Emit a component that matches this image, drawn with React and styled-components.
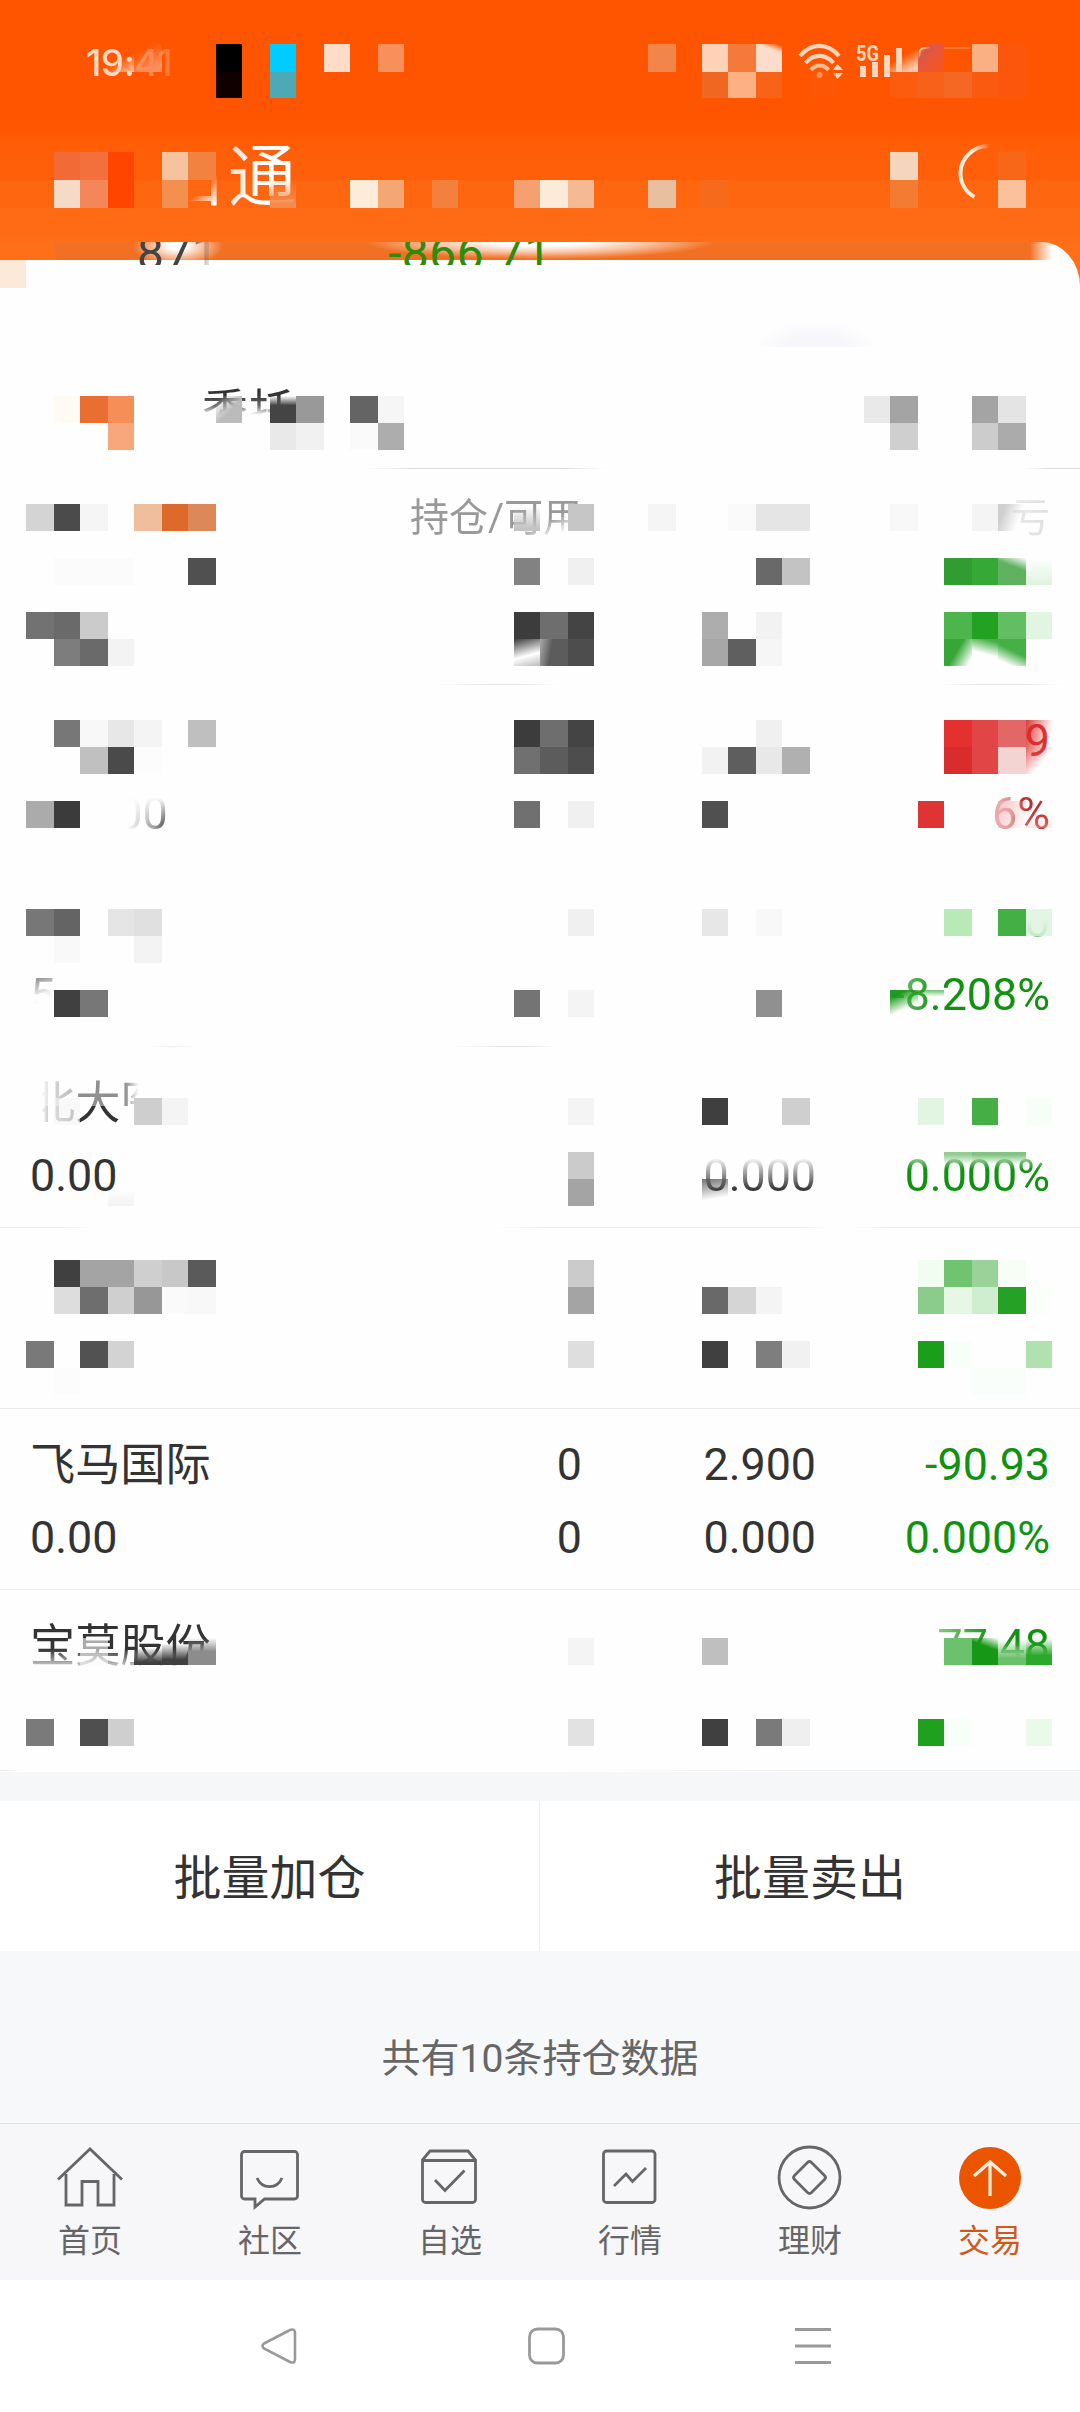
import React from "react";
import styled, { createGlobalStyle } from "styled-components";

const GlobalStyle = createGlobalStyle`
  * { box-sizing: border-box; }
  body { margin: 0; background: #fff; }
`;

const INK = "#333";
const GREEN = "#109210";
const RED = "#b93333";

const Screen = styled.div`
  position: relative;
  width: 1080px;
  height: 2412px;
  overflow: hidden;
  display: flex;
  flex-direction: column;
  background: #ff6f18;
  color: ${INK};
  font-family: Roboto, "Noto Sans CJK SC", sans-serif;
  font-size: 45px;
`;

const Fade = styled.span`
  display: inline-block;
  color: ${(p) => p.$color || "inherit"};
  mask-image: ${(p) => p.$mask || "none"};
  mask-composite: intersect;
`;

/* ---------- orange top ---------- */

const Top = styled.header`
  height: 242px;
  flex: none;
  display: flex;
  flex-direction: column;
  background: linear-gradient(#ff5500 0 126px, #ff5b04 140px, #ff5f09 152px 180px, #ff6610 181px 208px, #ff6b14 209px 236px, #ff6e17 242px);
`;

const StatusBar = styled.div`
  height: 126px;
  display: flex;
  justify-content: space-between;
  padding: 37px 88px 0 86px;
  color: #ffd9c2;
`;

const Clock = styled(Fade)`
  font: 500 37px/52px Inter, sans-serif;
  letter-spacing: -0.5px;
  height: 52px;
`;

const StatusIcons = styled.div`
  display: flex;
  width: 196px;
`;

const TitleBar = styled.div`
  flex: 1;
  display: flex;
  justify-content: space-between;
  padding: 16px 54px 0 160px;
`;

const Title = styled.div`
  display: flex;
  font-size: 68px;
  line-height: 72px;
  color: #fff;
`;

/* ---------- white sheet ---------- */

const Sheet = styled.section`
  flex: none;
  height: 1530px;
  display: flex;
  flex-direction: column;
  background: #fefefe;
  border-radius: 0 39px 0 0 / 0 44px 0 0;
  overflow: hidden;
`;

const Summary = styled.div`
  height: 23px;
  flex: none;
  overflow: hidden;
  display: flex;
  align-items: flex-end;
  padding-left: 137px;
  font-size: 48px;
  line-height: 40px;
  letter-spacing: 0.4px;
  background:
    radial-gradient(ellipse 175px 17px at 540px 0, #fff 25%, rgba(255, 255, 255, 0.6) 60%, transparent) 0 0 / 1080px 18px no-repeat,
    radial-gradient(ellipse 45px 20px at 178px 4px, #fff 20%, transparent) 0 0 / 1080px 18px no-repeat,
    linear-gradient(90deg, #ff6f18 54px, #f27023 55px 1030px, rgba(242, 112, 35, 0) 1052px) 0 0 / 1080px 18px no-repeat;
  span { width: 251px; margin-bottom: -9px; }
`;

const Banner = styled.div`
  height: 82px;
  flex: none;
  background: radial-gradient(ellipse 62px 26px at 816px 82px, #f7f7fb 45%, rgba(247, 247, 251, 0)) no-repeat;
`;

const rule = (image) => `
  background-image: ${image};
  background-size: 100% 1px;
  background-position: 0 100%;
  background-repeat: no-repeat;
`;

const Tabs = styled.nav`
  height: 122px;
  flex: none;
  padding: 32px 0 0 202px;
  font-size: 46px;
  letter-spacing: 1px;
  line-height: 64px;
  ${(p) => rule(p.$rule)}
`;

const TableHead = styled.div`
  height: 90px;
  flex: none;
  display: flex;
  justify-content: space-between;
  padding: 20px 30px 0 410px;
  font-size: 39px;
  line-height: 58px;
  color: #999;
`;

const Row = styled.div`
  height: ${(p) => p.$height || 181}px;
  flex: none;
  display: flex;
  flex-direction: column;
  justify-content: flex-end;
  padding-bottom: 16px;
  overflow: hidden;
  ${(p) => rule(p.$rule)}
`;

const Line = styled.div`
  height: 73px;
  flex: none;
  display: grid;
  grid-template-columns: 318px 234px 234px 234px;
  padding: 0 30px;
  line-height: 73px;
  font-size: 44.8px;
  white-space: nowrap;
  > * { justify-self: end; height: 73px; }
  > :first-child { justify-self: start; }
  &:first-child > :first-child { font-size: 45.2px; line-height: 75px; }
`;

/* ---------- lower part ---------- */

const Actions = styled.div`
  flex: none;
  display: flex;
  padding-top: 29px;
  background: #f6f7f9;
`;

const ActionButton = styled.button`
  flex: ${(p) => (p.$divided ? "1" : "0 0 539px")};
  height: 150px;
  padding: 0 0 4px;
  border: 0;
  border-left: ${(p) => (p.$divided ? "1px solid #ebebeb" : "0")};
  background: #fff;
  color: ${INK};
  font: inherit;
  font-size: 48px;
`;

const Count = styled.div`
  flex: none;
  height: 173px;
  padding-top: 79px;
  background: #f7f8fa;
  color: #666;
  font-size: 39px;
  line-height: 58px;
  text-align: center;
  border-bottom: 1px solid #e2e3e6;
`;

const BottomNav = styled.nav`
  flex: none;
  height: 156px;
  display: flex;
  background: #f7f7fa;
`;

const NavItem = styled.a`
  flex: 1;
  display: flex;
  flex-direction: column;
  align-items: center;
  padding-top: 19px;
  font-size: 32px;
  line-height: 48px;
  color: ${(p) => (p.$active ? "#d05a18" : "#666")};
  svg { flex: none; margin-bottom: 2px; }
`;

const SystemNav = styled.div`
  flex: 1;
  display: flex;
  align-items: flex-start;
  gap: 226px;
  padding: 46px 0 0 259px;
  background: #fff;
  svg { display: block; }
`;

/* ---------- pixelated privacy layer ---------- */

const Mosaic = styled.div`
  position: absolute;
  top: 18px;
  left: 0;
  display: grid;
  grid-template-columns: repeat(9, 26px 28px) repeat(4, 28px 26px) repeat(7, 26px 28px);
  grid-template-rows: repeat(3, 26px 28px) 28px 26px 26px 28px repeat(54, 27px);
  pointer-events: none;
`;

const Tile = styled.i`
  grid-column: ${(p) => p.$col + 1};
  grid-row: ${(p) => p.$row + 1};
  background: ${(p) => p.$fill};
`;

const down = (c, from = 0, to = 100) => `linear-gradient(transparent ${from}%, ${c} ${to}%)`;
const up = (c, from = 0, to = 100) => `linear-gradient(${c} ${from}%, transparent ${to}%)`;

const TILES = {
  1: { 4: "linear-gradient(150deg, transparent 55%, #ffc4a2)", 5: "linear-gradient(150deg, transparent 25%, #fa8d5a 80%)", 8: "#000", 10: "#00ccff", 12: "#ffdcc8", 14: "#f9905c", 24: "#f2854a", 26: "#ffd3b8", 27: "#f57a3a", 28: "linear-gradient(200deg, transparent 4%, #fedccb 24%)", 33: "linear-gradient(150deg, transparent 45%, #ffc9a9 85%)", 34: "linear-gradient(135deg, transparent 15%, #d8584a 30%, #e9563a 50%, #f8561c)", 36: "#fbb083", 37: "#fc560c" },
  2: { 8: "#100000", 10: "#4da9b5", 26: "#f06722", 27: "#fcb084", 28: "#f76418", 30: "rgba(251, 90, 10, .5)", 33: "#fb5c0e", 34: "#f8611a", 35: "#f46824", 36: "#f95a10", 37: "#fb560c" },
  5: { 2: "#f26a36", 3: "#f3703d", 4: "#ff4500", 6: "#f6c39e", 7: "#f2823f", 33: "#f6d5bd", 37: "#f86618" },
  6: { 2: "#f6dac8", 3: "#f58659", 4: "#ff4500", 6: "#f39050", 10: down("#f58a4c", 0, 85), 13: "#feecdb", 14: "#f4a773", 16: "#f4803d", 19: "#f5a070", 20: "#fcebd9", 21: "#f5ba93", 24: "#e8bf9f", 26: "#f66a1c", 33: "#f47b32", 37: "#fbc19d" },
  9: { 0: "#fde9da" },
  14: { 2: "#fffaf4", 3: "#e86f31", 4: "#f68e58", 8: "linear-gradient(135deg, transparent 10%, #bbb 55%)", 10: down("#444", 0, 35), 11: "#999", 13: "#646464", 14: "#f6f6f6", 32: "#e9e9e9", 33: "#a4a4a4", 36: "#a4a4a4", 37: "#e4e4e4" },
  15: { 4: "#f8a67c", 10: "#e9e9e9", 11: "#f1f1f1", 13: "#fafafa", 14: "#adadad", 33: "#cfcfcf", 36: "#ccc", 37: "#ababab" },
  18: { 1: "#d4d4d4", 2: "#4b4b4b", 3: "#f5f5f5", 5: "#efbe9c", 6: "#dd6a28", 7: "#dc8858", 19: down("#c4c4c4", 10, 90), 21: "#c6c6c6", 24: "#f5f5f5", 27: "#fafafa", 28: "#e5e5e5", 29: "#e5e5e5", 33: "#f8f8f8", 36: "#f4f4f4", 37: "linear-gradient(110deg, #cfcfcf 20%, transparent 70%)" },
  20: { 2: "#fbfbfb", 3: "#fbfbfb", 4: "#fbfbfb", 7: "#505050", 19: "#828282", 21: "#f0f0f0", 28: "#696969", 29: "#c3c3c3", 35: "#319c31", 36: "#36a836", 37: "linear-gradient(200deg, transparent, #60b260 35%)", 38: "linear-gradient(transparent, rgba(215, 240, 215, .8))" },
  22: { 1: "#727272", 2: "#6a6a6a", 3: "#cbcbcb", 19: "#3c3c3c", 20: "#6e6e6e", 21: "#444", 26: "#adadad", 28: "#f2f2f2", 35: "#4cb64c", 36: "#22a122", 37: "#63bd63", 38: "#e2f5e2" },
  23: { 2: "#7d7d7d", 3: "#6a6a6a", 4: "#f3f3f3", 19: "linear-gradient(165deg, #3c3c3c, rgba(255,255,255,.9) 60%, #bbb)", 20: "linear-gradient(100deg, #aaa, #5c5c5c 40%)", 21: "#4d4d4d", 26: "#a7a7a7", 27: "#5f5f5f", 28: "#f6f6f6", 35: "linear-gradient(120deg, #36a736 45%, rgba(54, 167, 54, 0) 90%)", 36: "linear-gradient(195deg, #45b045 10%, rgba(69, 176, 69, 0) 55%)", 37: "linear-gradient(205deg, #45b045 45%, rgba(69, 176, 69, 0) 85%)" },
  26: { 2: "#777", 3: "#f8f8f8", 4: "#e7e7e7", 5: "#f4f4f4", 7: "#bfbfbf", 19: "#3c3c3c", 20: "#6e6e6e", 21: "#444", 28: "#f0f0f0", 35: "#e53030", 36: "#e24545", 37: "#e36767", 38: "linear-gradient(100deg, rgba(218, 40, 40, .9), rgba(230, 90, 90, 0) 90%)" },
  27: { 3: "#c0c0c0", 4: "#4a4a4a", 5: "#fcfcfc", 19: "#707070", 20: "#5c5c5c", 21: "#4d4d4d", 26: "#f2f2f2", 27: "#5e5e5e", 28: "#e8e8e8", 29: "#b0b0b0", 35: "#d92c2c", 36: "#e24545", 37: "#f4d3d3", 38: "linear-gradient(130deg, rgba(225, 60, 60, .8), rgba(230, 90, 90, 0) 60%)" },
  29: { 1: "#ababab", 2: "#3b3b3b", 19: "#707070", 21: "#f0f0f0", 26: "#505050", 34: "#de3434", 37: "linear-gradient(115deg, rgba(245, 170, 170, .7), rgba(245, 170, 170, 0))", 38: down("rgba(245, 200, 200, .4)", 40) },
  33: { 1: "#777", 2: "#646464", 4: "#e5e5e5", 5: "#e0e0e0", 21: "#f0f0f0", 26: "#e7e7e7", 28: "#f8f8f8", 35: "#b7eab7", 37: "#44af44", 38: "rgba(217, 243, 217, .75)" },
  34: { 2: "#f9f9f9", 5: "#f3f3f3" },
  36: { 2: "#404040", 3: "#777", 19: "#747474", 21: "#f4f4f4", 28: "#909090", 33: "linear-gradient(155deg, rgba(20, 150, 20, .95) 20%, rgba(20, 150, 20, 0) 65%)", 34: up("rgba(20, 150, 20, .6)", 0, 25) },
  40: { 2: "rgba(245, 245, 245, .6)", 5: "#cecece", 6: "#f4f4f4", 21: "#f4f4f4", 26: "#3f3f3f", 29: "#cfcfcf", 34: "#e2f5e2", 36: "#45ae45", 38: "#f7fdf7" },
  42: { 21: "#cbcbcb", 35: up("#94cc94", 10, 45), 36: up("#80c480", 10, 45), 37: up("#80c480", 10, 45) },
  43: { 4: down("#f2f2f2", 40), 21: "#a4a4a4", 26: "linear-gradient(170deg, rgba(90, 90, 90, .85), transparent 70%)" },
  46: { 2: "#404040", 3: "#a4a4a4", 4: "#a4a4a4", 5: "#cfcfcf", 6: "#c8c8c8", 7: "#5a5a5a", 21: "#cbcbcb", 34: "#f1fdf1", 35: "#70c470", 36: "#9ad29a", 37: "#f6fef6" },
  47: { 2: "#ddd", 3: "#6e6e6e", 4: "#cfcfcf", 5: "#979797", 6: "#fafafa", 7: "#f8f8f8", 21: "#a4a4a4", 26: "#696969", 27: "#d5d5d5", 28: "#f4f4f4", 34: "#8bcb8b", 35: "#e6f7e6", 36: "#cfeecf", 37: "#25a125", 38: "#fafffa" },
  49: { 1: "#797979", 3: "#525252", 4: "#d3d3d3", 21: "#dedede", 26: "#404040", 28: "#7e7e7e", 29: "#f1f1f1", 34: "#1b9f1b", 35: "#f8fef8", 38: "#b0e2b0" },
  50: { 2: "#fcfcfc", 36: "#fafefa", 37: "#fafefa" },
  60: { 3: "rgba(250, 250, 250, .6)", 5: down("#404040", 35, 90), 6: down("#404040", 20, 80), 7: down("#8c8c8c", 0, 50), 21: "#f4f4f4", 26: "#bfbfbf", 35: "#6cc26c", 36: "linear-gradient(200deg, transparent, #169816 35%)", 37: down("#6cc26c", 5, 75), 38: down("#2ba92b", 0, 65) },
  63: { 1: "#7a7a7a", 3: "#4f4f4f", 4: "#cfcfcf", 21: "#e2e2e2", 26: "#404040", 28: "#7a7a7a", 29: "#efefef", 34: "#1fa01f", 35: "#f8fef8", 38: "#eafaea" },
};

/* ---------- positions ---------- */

const FULL = "linear-gradient(#ebebeb, #ebebeb)";
const NONE = "none";
const cell = (text, mask, color) => ({ text, mask, color });
const none = cell("");

const ROWS = [
  {
    height: 126,
    rule: "linear-gradient(90deg, transparent 435px, #e4e4e4 490px, #e4e4e4 520px, transparent 560px 940px, #e4e4e4 980px, #e4e4e4 1020px, transparent 1065px)",
    lines: [
      [none, none, none, none],
      [none, none, none, none],
    ],
  },
  {
    rule: NONE,
    lines: [
      [none, none, none, cell("9", NONE, "#d33")],
      [
        cell("000.00", "linear-gradient(90deg, transparent 70%, rgba(0,0,0,.25) 80%, rgba(0,0,0,.5) 90%, #000), linear-gradient(transparent 28%, #000 65%)", "#444"),
        none,
        none,
        cell("6%", "linear-gradient(90deg, rgba(0,0,0,.35), rgba(0,0,0,.55) 35%, #000 45%)", RED),
      ],
    ],
  },
  {
    rule: "linear-gradient(90deg, transparent 150px, #ededed 172px, transparent 198px 450px, #e6e6e6 500px, #e6e6e6 530px, transparent 558px)",
    lines: [
      [none, none, none, cell("0", "linear-gradient(transparent 45%, rgba(0,0,0,.5) 70%)", GREEN)],
      [
        cell("5", "linear-gradient(160deg, #000 25%, rgba(0,0,0,.1) 50%, transparent 60%)", "#888"),
        none,
        none,
        cell("-8.208%", "linear-gradient(100deg, rgba(0,0,0,.5), rgba(0,0,0,.8) 20%, #000 30%)", GREEN),
      ],
    ],
  },
  {
    rule: "linear-gradient(90deg, #ebebeb 60px, transparent 95px 495px, #ebebeb 545px 800px, transparent 825px 850px, #ebebeb 890px)",
    lines: [
      [
        cell(
          "北大医药",
          "linear-gradient(90deg, transparent 6%, rgba(0,0,0,.35) 12%, rgba(0,0,0,.6) 24%, #000 27%, #000 48%, rgba(0,0,0,.6) 52%, transparent 60%), linear-gradient(90deg, #000 50%, transparent 50%), linear-gradient(transparent 25%, rgba(0,0,0,.4) 45%, #000 62%)"
        ),
        none,
        none,
        none,
      ],
      [cell("0.00"), none, cell("0.000", "linear-gradient(transparent 25%, #000 70%)"), cell("0.000%", "linear-gradient(rgba(0,0,0,.4) 25%, #000 42%)", GREEN)],
    ],
  },
  { rule: FULL, lines: [[none, none, none, none], [none, none, none, none]] },
  {
    rule: FULL,
    lines: [
      [cell("飞马国际"), cell("0"), cell("2.900"), cell("-90.93", NONE, GREEN)],
      [cell("0.00"), cell("0"), cell("0.000"), cell("0.000%", NONE, GREEN)],
    ],
  },
  {
    rule: "linear-gradient(90deg, #e8e9ea, transparent 25px 550px, #eeeff1 800px)",
    lines: [
      [cell("宝莫股份", "linear-gradient(#000 55%, rgba(0,0,0,.35) 75%)"), none, none, cell("77.48", "linear-gradient(90deg, rgba(0,0,0,.5), #000 50%), linear-gradient(#000 50%, rgba(0,0,0,.3) 65%)", GREEN)],
      [none, none, none, none],
    ],
  },
];

/* The third character of this name only keeps its upper-left corner. */
ROWS[3].lines[0][0].mask =
  "linear-gradient(90deg, transparent 6%, rgba(0,0,0,.35) 12%, rgba(0,0,0,.6) 24%, #000 27%, #000 49%, rgba(0,0,0,.6) 52%, transparent 60%), conic-gradient(from 0deg at 50% 55%, #000 90deg, transparent 90deg 180deg, #000 180deg 270deg, rgba(0,0,0,.55) 270deg)";

const NAV = [
  {
    label: "首页",
    icon: (
      <>
        <path d="M4 36.500L36 6l32 30.500" />
        <path d="M12 31v31h16V38.500h16V62h16V31" />
      </>
    ),
  },
  {
    label: "社区",
    icon: (
      <>
        <path d="M10.500 8.500h50a3 3 0 0 1 3 3V53a3 3 0 0 1-3 3H30.500l-9.500 8V56H10.500a3 3 0 0 1-3-3V11.500a3 3 0 0 1 3-3z" />
        <path d="M23 35c5 11.500 20 11.500 25 0" />
      </>
    ),
  },
  {
    label: "自选",
    icon: (
      <>
        <path d="M8.500 17l7.500-9h38l7.500 9v39.500a3 3 0 0 1-3 3h-47a3 3 0 0 1-3-3z" />
        <path d="M8.500 17.500h53M21 37L31 47.500 50.500 27.500" />
      </>
    ),
  },
  {
    label: "行情",
    icon: (
      <>
        <rect x="9.500" y="8" width="51.500" height="51.500" rx="3" />
        <path d="M20 43L32 31l6.500 7.500L52 25" />
      </>
    ),
  },
  {
    label: "理财",
    icon: (
      <>
        <circle cx="35.500" cy="34.500" r="30.500" />
        <path d="M33.500 19.500q2-2 4 0l13 13q2 2 0 4l-13 13q-2 2-4 0l-13-13q-2-2 0-4z" />
      </>
    ),
  },
  {
    label: "交易",
    active: true,
    icon: (
      <>
        <circle cx="36" cy="35" r="31" fill="#eb5500" stroke="none" />
        <path d="M36 53V20M20 33l16-14 16 14" stroke="#ffeedd" strokeWidth="3.200" />
      </>
    ),
  },
];

const StatusGlyphs = () => (
  <svg width="196" height="60" viewBox="0 0 196 60" fill="none" stroke="#ffd6bd" strokeWidth="4.200">
    <g transform="translate(0 1)">
      <path d="M4 18c11-13.500 28-13.500 39 0" />
      <path d="M9.500 25c8-9.500 20-9.500 28 0" />
      <path d="M15 32c5-6 12.500-6 17.500 0" strokeOpacity=".8" />
      <circle cx="23.500" cy="37" r="3" fill="#ffc39f" stroke="none" />
      <path d="M36.500 32l5-6 5.500 6zM36.500 35l5 6 5.500-6z" fill="#ffd6bd" stroke="none" />
    </g>
    <text x="60" y="23.500" fill="#ffd6bd" stroke="none" fontFamily="Roboto, sans-serif" fontWeight="700" fontSize="22.500" textLength="23" lengthAdjust="spacingAndGlyphs">5G</text>
    <path d="M67 29v11M79 25v15M91 18v22M103 11v29" strokeWidth="6" strokeLinecap="butt" />
    <path d="M123.500 34V17q0-6 6-6h10" strokeWidth="2" />
    <path d="M139 11h35" strokeWidth="1.500" strokeOpacity=".35" />
  </svg>
);

export default function App() {
  return (
    <>
      <GlobalStyle />
      <Screen>
        <Top>
          <StatusBar>
            <Clock $mask="linear-gradient(90deg, #000 52%, rgba(0,0,0,.45) 62%, rgba(0,0,0,.25))">19:41</Clock>
            <StatusIcons>
              <StatusGlyphs />
            </StatusIcons>
          </StatusBar>
          <TitleBar>
            <Title>
              <Fade $mask="linear-gradient(135deg, transparent 52%, #000 70%)">日</Fade>
              <Fade $mask="linear-gradient(100deg, rgba(0,0,0,.75), #000 45%)">通</Fade>
            </Title>
            <svg width="80" height="64" viewBox="0 0 80 64" fill="none">
              <defs>
                <linearGradient id="ring" x1="0" x2="1">
                  <stop offset="0.4" stopColor="#ffe9d8" />
                  <stop offset="1" stopColor="#ffe9d8" stopOpacity="0" />
                </linearGradient>
              </defs>
              <path d="M44 4C27 3 14.500 17 14.500 31c0 10 5 19 14 24" stroke="url(#ring)" strokeWidth="4" />
            </svg>
          </TitleBar>
        </Top>

        <Sheet>
          <Summary>
            <Fade $color="#444" $mask="linear-gradient(90deg, #000 20%, rgba(0,0,0,.2) 28%)">871</Fade>
            <Fade $color="#2e8b0e">-866.71</Fade>
          </Summary>
          <Banner />
          <Tabs $rule="linear-gradient(90deg, transparent 365px, #d9d9d9 420px 560px, transparent 606px 1025px, #d9d9d9 1050px)">
            <Fade $mask="linear-gradient(#000 25%, rgba(0,0,0,.7) 42%, transparent 56%)">委托</Fade>
          </Tabs>
          <TableHead>
            <Fade $mask="linear-gradient(to bottom right, #000 62%, transparent 76%)">持仓/可用</Fade>
            <Fade $mask="linear-gradient(90deg, rgba(0,0,0,.2), rgba(0,0,0,.3))">亏</Fade>
          </TableHead>
          {ROWS.map((row, i) => (
            <Row key={i} $height={row.height} $rule={row.rule}>
              {row.lines.map((line, j) => (
                <Line key={j}>
                  {line.map((c, k) => (
                    <Fade key={k} $mask={c.mask} $color={c.color}>
                      {c.text}
                    </Fade>
                  ))}
                </Line>
              ))}
            </Row>
          ))}
        </Sheet>

        <Actions>
          <ActionButton>批量加仓</ActionButton>
          <ActionButton $divided>批量卖出</ActionButton>
        </Actions>
        <Count>共有10条持仓数据</Count>

        <BottomNav>
          {NAV.map((item) => (
            <NavItem key={item.label} $active={item.active}>
              <svg width="72" height="72" viewBox="0 0 72 72" fill="none" stroke="#666" strokeWidth="2.800">
                {item.icon}
              </svg>
              {item.label}
            </NavItem>
          ))}
        </BottomNav>

        <SystemNav>
          <svg width="40" height="40" viewBox="0 0 40 40" fill="none" stroke="#999" strokeWidth="2.600">
            <path d="M5 17.500L31 4q5-2 5 3v26q0 5-5 3L5 22.500q-3-2.500 0-5z" />
          </svg>
          <svg width="44" height="40" viewBox="0 0 44 40" fill="none" stroke="#999" strokeWidth="2.800">
            <rect x="4.500" y="3" width="34" height="34" rx="8" />
          </svg>
          <svg width="40" height="40" viewBox="0 0 40 40" stroke="#999" strokeWidth="3">
            <path d="M0 3.500h36M0 20h36M0 36.500h36" />
          </svg>
        </SystemNav>

        <Mosaic>
          {Object.entries(TILES).flatMap(([row, cells]) =>
            Object.entries(cells).map(([col, fill]) => (
              <Tile key={`${row}-${col}`} $row={+row} $col={+col} $fill={fill} />
            ))
          )}
        </Mosaic>
      </Screen>
    </>
  );
}
